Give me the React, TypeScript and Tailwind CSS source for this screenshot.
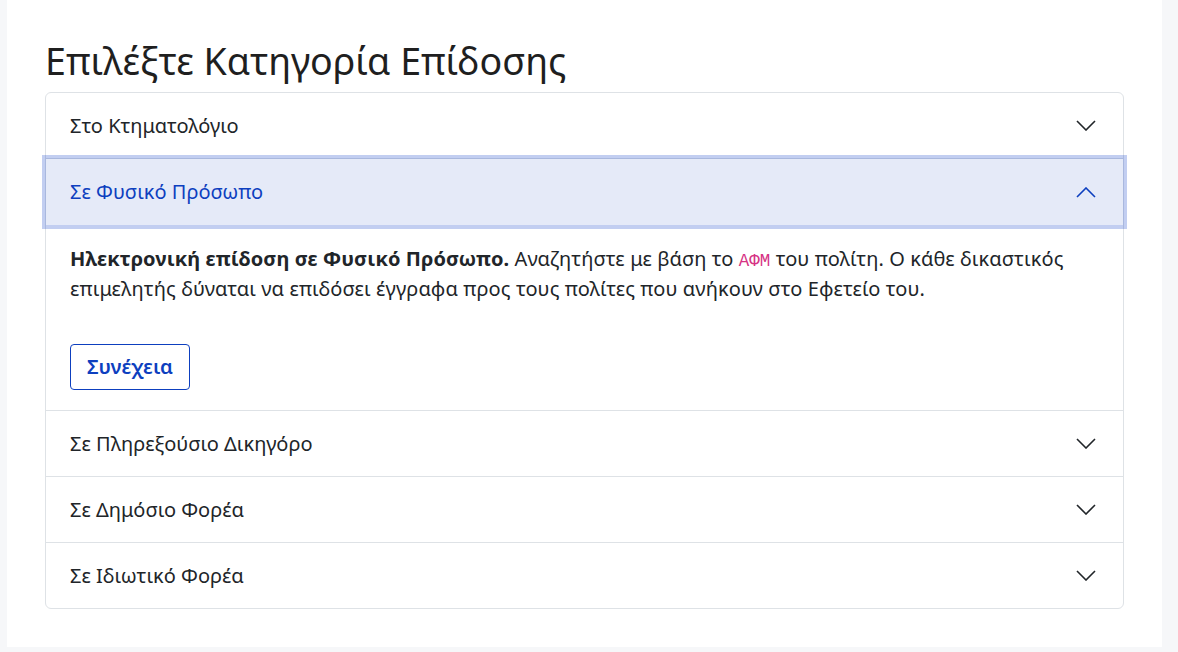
import { useState } from 'react';

type Item = {
  id: string;
  label: string;
};

const items: Item[] = [
  { id: 'ktimatologio', label: 'Στο Κτηματολόγιο' },
  { id: 'fysiko', label: 'Σε Φυσικό Πρόσωπο' },
  { id: 'dikigoros', label: 'Σε Πληρεξούσιο Δικηγόρο' },
  { id: 'dimosio', label: 'Σε Δημόσιο Φορέα' },
  { id: 'idiotiko', label: 'Σε Ιδιωτικό Φορέα' }
];

function Chevron({ up }: { up: boolean }) {
  return (
    <svg width="20" height="11" viewBox="0 0 20 11" fill="none" className={up ? 'rotate-180' : ''}>
      <polyline points="1,1 10,10 19,1" stroke="currentColor" strokeWidth="1.6" strokeLinejoin="miter" />
    </svg>
  );
}

export default function App() {
  const [open, setOpen] = useState<string | null>('fysiko');

  return (
    <div className="min-h-screen bg-[#f6f7f9] font-['Noto_Sans',sans-serif]">
      <div className="ml-[7px] h-[647px] w-[1155px] bg-white px-[38px] pt-[36px]">
        <h1 className="mb-[6px] text-[37.6px] leading-[50px] text-[#1f1f1f]">Επιλέξτε Κατηγορία Επίδοσης</h1>

        <div className="rounded-[6px] border border-[#dee2e6]">
          {items.map((item, i) => {
            const isOpen = open === item.id;
            return (
              <div key={item.id} className={i > 0 ? 'border-t border-[#dee2e6]' : ''}>
                <button
                  type="button"
                  onClick={() => setOpen(isOpen ? null : item.id)}
                  className={
                    isOpen
                      ? 'relative z-10 flex h-[66px] w-full items-center justify-between bg-[#e5eaf8] pl-[24px] pr-[27px] text-left text-[20px] text-[#0d3fbf] shadow-[0_0_0_4px_rgba(13,60,200,0.25)]'
                      : 'flex h-[65px] w-full items-center justify-between rounded-t-[6px] pl-[24px] pr-[27px] text-left text-[20px] text-[#212529]'
                  }
                >
                  <span>{item.label}</span>
                  <Chevron up={isOpen} />
                </button>
                {isOpen && item.id === 'fysiko' && (
                  <div className="px-[24px] pb-[20px] pt-[19px] text-[20px] leading-[30px] text-[#212529]">
                    <p className="mb-[40px] tracking-[0.1px]">
                      <strong className="font-bold">Ηλεκτρονική επίδοση σε Φυσικό Πρόσωπο.</strong> Αναζητήστε με βάση το{' '}
                      <code className="font-['Liberation_Mono',monospace] text-[17.5px] leading-none tracking-normal text-[#d63384]">ΑΦΜ</code> του πολίτη. Ο κάθε
                      δικαστικός επιμελητής δύναται να επιδόσει έγγραφα προς τους πολίτες που ανήκουν στο Εφετείο του.
                    </p>
                    <button
                      type="button"
                      className="h-[46px] rounded-[4px] border border-[#0d3fbf] px-[16px] text-[20px] font-semibold text-[#0d3fbf]"
                    >
                      Συνέχεια
                    </button>
                  </div>
                )}
              </div>
            );
          })}
        </div>
      </div>
    </div>
  );
}
